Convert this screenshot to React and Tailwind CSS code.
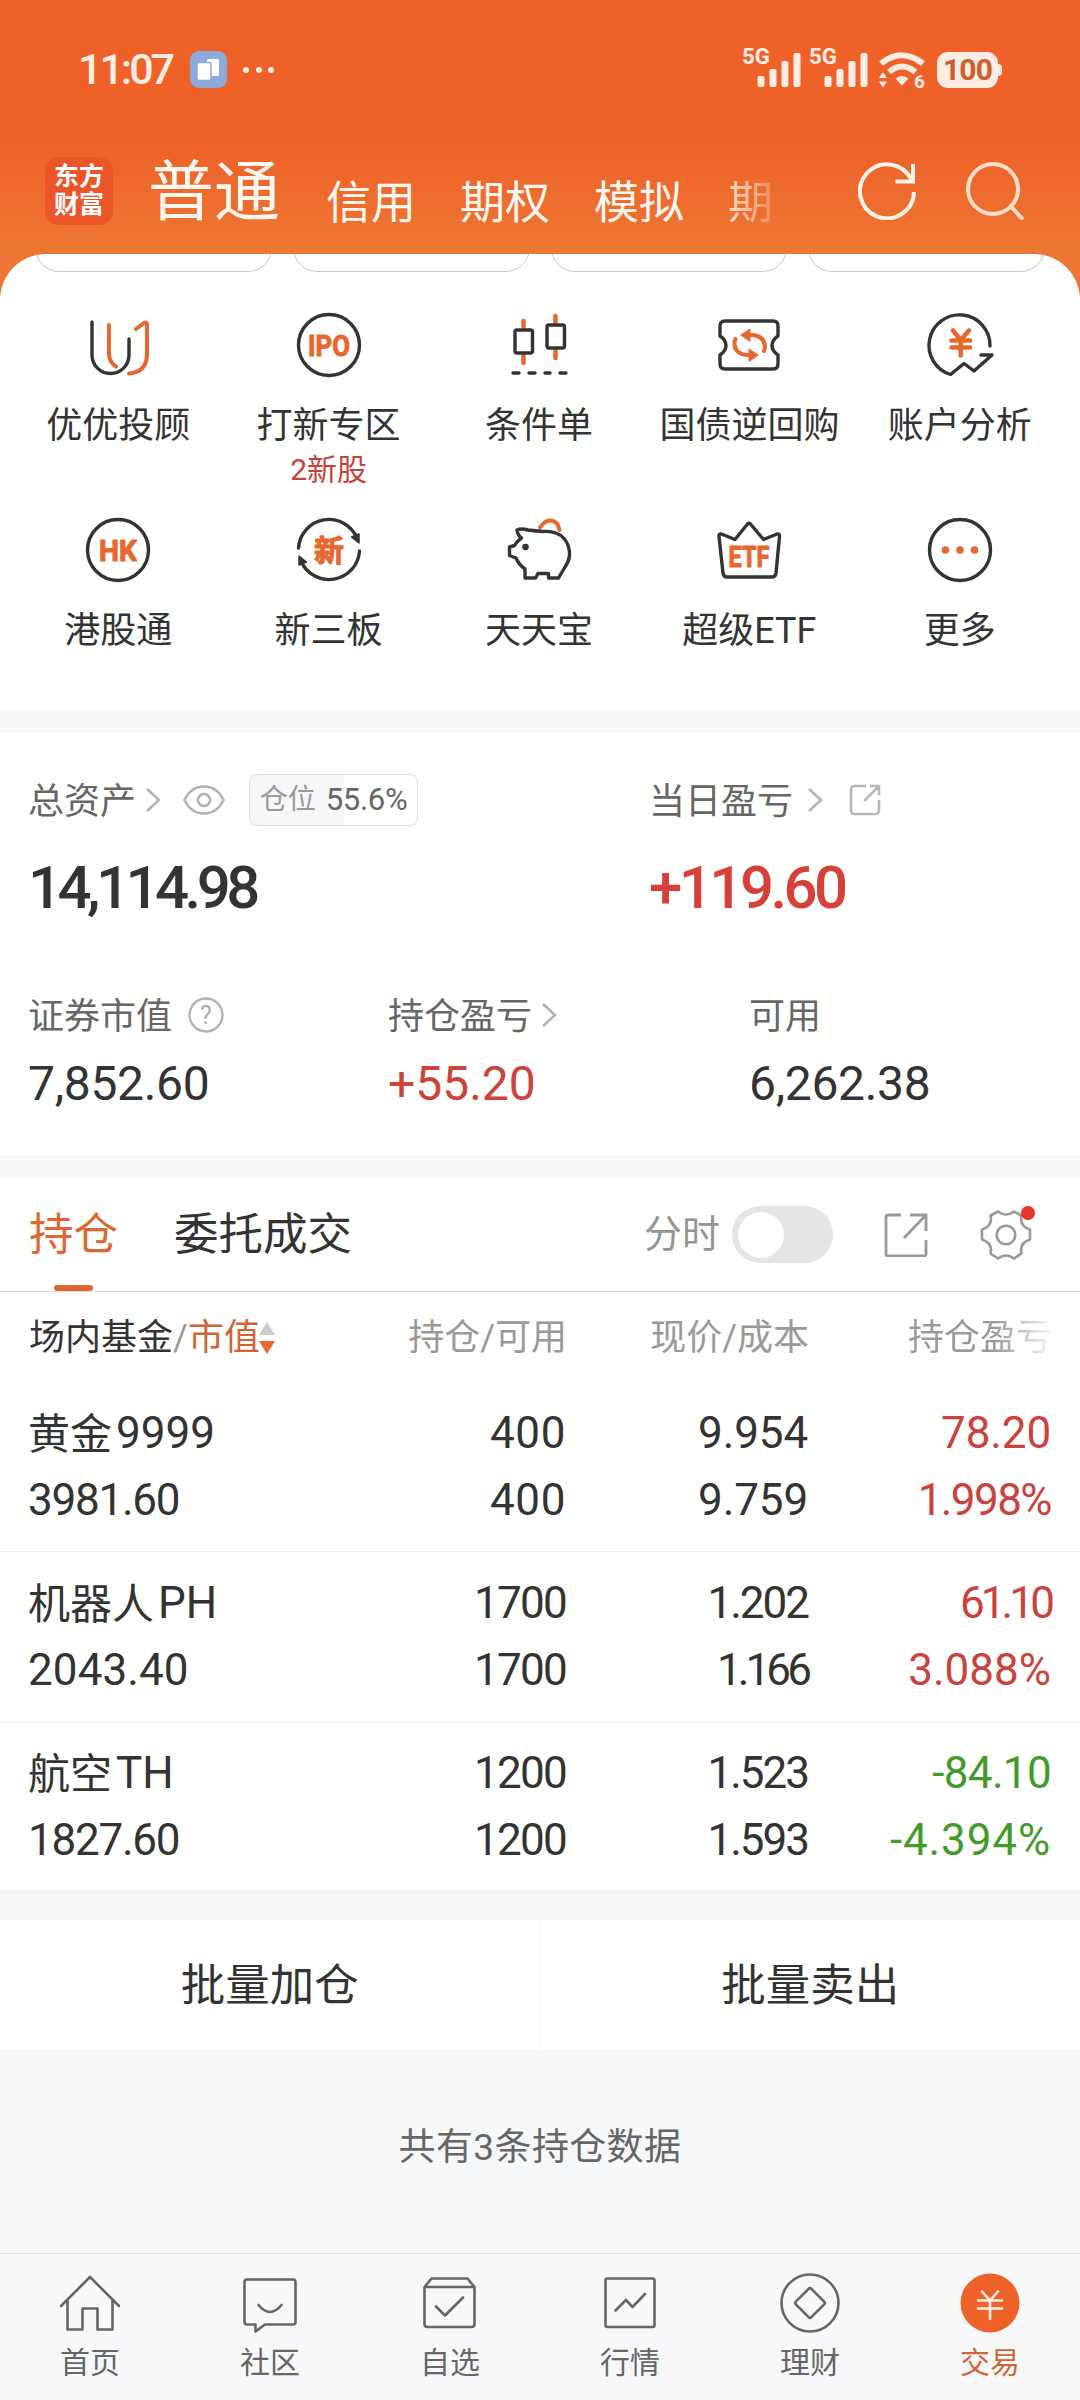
import clsx from "clsx";

const INK = "#333333";
const ORANGE = "#e8672f";

const marketTabs = ["信用", "期权", "模拟"];

const shortcuts = [
  { label: "优优投顾", icon: AdvisorIcon },
  { label: "打新专区", icon: IpoIcon, note: "2新股" },
  { label: "条件单", icon: CandleIcon },
  { label: "国债逆回购", icon: RepoIcon },
  { label: "账户分析", icon: AnalysisIcon },
  { label: "港股通", icon: HkIcon },
  { label: "新三板", icon: NeeqIcon },
  { label: "天天宝", icon: PiggyIcon },
  { label: "超级ETF", icon: EtfIcon },
  { label: "更多", icon: MoreIcon },
];

const holdings = [
  {
    name: "黄金",
    suffix: "9999",
    value: "3981.60",
    amount: "400",
    usable: "400",
    price: "9.954",
    cost: "9.759",
    profit: "78.20",
    rate: "1.998%",
    up: true,
  },
  {
    name: "机器人",
    suffix: "PH",
    value: "2043.40",
    amount: "1700",
    usable: "1700",
    price: "1.202",
    cost: "1.166",
    profit: "61.10",
    rate: "3.088%",
    up: true,
  },
  {
    name: "航空",
    suffix: "TH",
    value: "1827.60",
    amount: "1200",
    usable: "1200",
    price: "1.523",
    cost: "1.593",
    profit: "-84.10",
    rate: "-4.394%",
    up: false,
  },
];

const navItems = [
  { label: "首页", icon: HomeIcon },
  { label: "社区", icon: ChatIcon },
  { label: "自选", icon: PickIcon },
  { label: "行情", icon: QuoteIcon },
  { label: "理财", icon: WealthIcon },
  { label: "交易", icon: TradeIcon, active: true },
];

// Proportional figures: narrow characters pull the whole number tighter.
const charAdjust = { 1: -0.2, ".": -0.07, ",": -0.07, "-": 0.14 };

function Num({ children, className }) {
  const chars = [...children];
  const total = chars.reduce((sum, c) => sum + (charAdjust[c] ?? 0.014), 0);
  return (
    <span className={clsx("block", className)} style={{ letterSpacing: `${(total / chars.length).toFixed(4)}em` }}>
      {children}
    </span>
  );
}

/* ---------- shortcut icons, 64 x 64 ---------- */

function Glyph({ children }) {
  return (
    <svg
      viewBox="0 0 64 64"
      className="h-16 w-16 overflow-visible"
      fill="none"
      stroke={INK}
      strokeWidth="3.4"
      strokeLinecap="round"
      strokeLinejoin="round"
    >
      {children}
    </svg>
  );
}

function GlyphText({ children, size = 30, width, y = 43 }) {
  return (
    <text
      x="32"
      y={y}
      textAnchor="middle"
      textLength={width}
      lengthAdjust="spacingAndGlyphs"
      fontSize={size}
      fontWeight="700"
      fill={ORANGE}
      stroke={ORANGE}
      strokeWidth="1"
    >
      {children}
    </text>
  );
}

function AdvisorIcon() {
  return (
    <Glyph>
      <path d="M6 9v33a18.5 18.5 0 0 0 37 0V26" />
      <path stroke={ORANGE} strokeWidth="4" d="M23 12v29q0 8 7 12.500M50 16l8-6q3-1.500 3 2v29q0 18-18 19.500" />
    </Glyph>
  );
}

function IpoIcon() {
  return (
    <Glyph>
      <circle cx="32" cy="32" r="30.500" />
      <GlyphText width={42}>IPO</GlyphText>
    </Glyph>
  );
}

function CandleIcon() {
  return (
    <Glyph>
      <path stroke={ORANGE} strokeWidth="4.500" d="M16.500 8v6M16.500 43v7M48.500 3v6M48.500 38v7" />
      <rect x="8" y="17" width="17.500" height="23" rx="2" />
      <rect x="40" y="12" width="17.500" height="23" rx="2" />
      <path d="M6 60h6M22 60h6M38 60h5M53 60h6" />
    </Glyph>
  );
}

function RepoIcon() {
  return (
    <Glyph>
      <path d="M8 8h48q5 0 5 5v10q-6 4-6 9.500t6 9.500v9q0 5-5 5H8q-5 0-5-5v-9q6-4 6-9.500T3 23V13q0-5 5-5z" />
      <g stroke={ORANGE} strokeWidth="4">
        <path d="M31 22h4q12 1 13 11 0 3-1 5M35 42h-5q-12-1-12.500-11 0-3 1-5" />
        <path fill={ORANGE} strokeWidth="1" d="M24 22l9-6v12zM41 42l-9-6v12z" />
      </g>
    </Glyph>
  );
}

function AnalysisIcon() {
  return (
    <Glyph>
      <path d="M62 33A30.500 30.500 0 1 0 22.500 61.500L36 50.500 46 58l18-16H53" />
      <path stroke={ORANGE} strokeWidth="4.500" d="M25 17.500l7.700 9.500L41 17.500M23.500 27.500h18.500M23.500 34.500h18.500M32.700 28v14.500" />
    </Glyph>
  );
}

function HkIcon() {
  return (
    <Glyph>
      <circle cx="32" cy="32" r="30.500" />
      <GlyphText width={38}>HK</GlyphText>
    </Glyph>
  );
}

function NeeqIcon() {
  return (
    <Glyph>
      <path d="M1.500 30A30.500 30.500 0 0 1 60 20M62.500 33A30.500 30.500 0 0 1 4 43" />
      <path fill={INK} strokeWidth="1.500" d="M54.500 19l7.500-3v9zM9.500 44l-7.500 3v-9z" />
      <GlyphText size={30} width={30} y={42.5}>新</GlyphText>
    </Glyph>
  );
}

function PiggyIcon() {
  return (
    <Glyph>
      <path stroke={ORANGE} strokeWidth="4" d="M33 9.500Q38 2 44 2.500q7 1 8.500 9.500" />
      <path d="M10 12q4-2 11 0 8 1 15 1.500 14-1 21 7 6 7 5.500 17-.5 6-4.500 11.500L51.500 60H41.500v-4.500H31l-2.500 4.500H18v-9Q12 47 9 40l-6.500-2.500V29l5-1.500q2-4 7-7.500-4-3-4.500-8z" />
      <circle cx="18.500" cy="29" r="3.300" fill={INK} stroke="none" />
    </Glyph>
  );
}

function EtfIcon() {
  return (
    <Glyph>
      <path d="M4.500 16L18 21.500 30.500 6q1.500-1.500 3 0L46.500 21.500 60 16q3-.5 2.500 2.500L59 55q-.5 4-4 4H10q-3.500 0-4-4L2 18.500q-.5-3 2.500-2.500z" />
      <GlyphText size={29} width={41} y={49}>ETF</GlyphText>
    </Glyph>
  );
}

function MoreIcon() {
  return (
    <Glyph>
      <circle cx="32" cy="32" r="30.500" />
      <g fill={ORANGE} stroke="none">
        <circle cx="17.500" cy="32" r="3.800" />
        <circle cx="32" cy="32" r="3.800" />
        <circle cx="46.500" cy="32" r="3.800" />
      </g>
    </Glyph>
  );
}

/* ---------- bottom navigation icons, 60 x 60 ---------- */

function NavGlyph({ children }) {
  return (
    <svg
      viewBox="0 0 60 60"
      className="h-[60px] w-[60px]"
      fill="none"
      stroke="#666666"
      strokeWidth="2.600"
      strokeLinecap="round"
      strokeLinejoin="round"
    >
      {children}
    </svg>
  );
}

function HomeIcon() {
  return (
    <NavGlyph>
      <path d="M1 33L30 4l29 29M7.500 27v29.500h15V35.500h15v21h15V27" />
    </NavGlyph>
  );
}

function ChatIcon() {
  return (
    <NavGlyph>
      <path d="M7 6.500h46q2.500 0 2.500 2.500v40q0 2.500-2.500 2.500H25L15.500 58.500v-7H7Q4.500 51.500 4.500 49V9Q4.500 6.500 7 6.500zM18.500 32q11.500 14 23 0" />
    </NavGlyph>
  );
}

function PickIcon() {
  return (
    <NavGlyph>
      <path d="M4.500 14h50v37q0 3-3 3h-44q-3 0-3-3zl7-8.500h36l7 8.500M16 33.500l9 9L43 24.500" />
    </NavGlyph>
  );
}

function QuoteIcon() {
  return (
    <NavGlyph>
      <rect x="5.500" y="5.500" width="49" height="48.500" rx="2" />
      <path d="M15.500 37.500L26 27l6.500 7L45 21" />
    </NavGlyph>
  );
}

function WealthIcon() {
  return (
    <NavGlyph>
      <circle cx="30" cy="30" r="28.500" />
      <rect x="19" y="19" width="22" height="22" rx="2" transform="rotate(45 30 30)" />
    </NavGlyph>
  );
}

function TradeIcon() {
  return (
    <NavGlyph>
      <circle cx="30" cy="30" r="29.500" fill="#ee622a" stroke="none" />
      <path stroke="#fff0e6" d="M22 18.500l8 9 8-9M18 27.500h24M18 35.500h24M30 28v18" />
    </NavGlyph>
  );
}

/* ---------- small inline icons ---------- */

function Chevron({ className }) {
  return (
    <svg viewBox="0 0 16 26" className={clsx("h-[26px] w-4 shrink-0", className)} fill="none" stroke="#b3b3b3" strokeWidth="2.600">
      <path d="M2 2l12 11L2 24" />
    </svg>
  );
}

function EyeIcon() {
  return (
    <svg viewBox="0 0 42 30" className="ml-[22px] h-[30px] w-[42px]" fill="none" stroke="#b3b3b3" strokeWidth="2.600">
      <path d="M1.500 15Q8 1.500 21 1.500T40.500 15Q34 28.500 21 28.500T1.500 15z" />
      <circle cx="21" cy="15" r="6" />
    </svg>
  );
}

function Signal() {
  return (
    <svg viewBox="0 -8 60 48" className="h-12 w-[60px]" fill="#ffece3">
      <text x="0" y="16" fontSize="21.500" fontWeight="700" textLength="28" lengthAdjust="spacingAndGlyphs">
        5G
      </text>
      <rect x="15.500" y="28" width="7" height="11" rx="2" />
      <rect x="27.500" y="21" width="7" height="18" rx="2" />
      <rect x="39.500" y="13" width="7" height="26" rx="2" />
      <rect x="51.500" y="5" width="7" height="34" rx="2" />
    </svg>
  );
}

function Wifi() {
  return (
    <svg viewBox="0 -4 50 46" className="h-[46px] w-[50px]" fill="none" stroke="#ffece3">
      <path strokeWidth="6" d="M3 12.500Q23.500-4 45 12.500" />
      <path strokeWidth="6" d="M11 21Q24 10 37.500 21" />
      <path fill="#ffece3" stroke="none" d="M17.500 27.500q6.500-5 13 0L24 34.500zM1 27l4-6 4 6zM1 30.500h8l-4 6z" />
      <text x="36" y="36.500" fontSize="19" fontWeight="700" fill="#ffece3" stroke="none">
        6
      </text>
    </svg>
  );
}

function StatusBar() {
  return (
    <div className="flex h-[139px] items-center justify-between pl-[78px] pr-[78px] text-[#ffece3]">
      <div className="flex items-center">
        <span className="w-[97px] text-[43px] font-medium leading-none tracking-[-0.07em]">11:07</span>
        <svg viewBox="0 0 37 37" className="ml-[15px] h-[37px] w-[37px]">
          <rect width="37" height="37" rx="9" fill="#8caadc" />
          <rect x="17" y="8" width="12" height="17" rx="1.500" fill="#fff" />
          <rect x="7" y="11.500" width="14" height="18" rx="2" fill="#fff" stroke="#8caadc" strokeWidth="1.500" />
        </svg>
        <div className="ml-[16px] flex gap-[6.500px]">
          <i className="h-[6px] w-[6px] rounded-full bg-[#ffece3]" />
          <i className="h-[6px] w-[6px] rounded-full bg-[#ffece3]" />
          <i className="h-[6px] w-[6px] rounded-full bg-[#ffece3]" />
        </div>
      </div>
      <div className="flex items-center">
        <div className="flex gap-[7px] pb-3">
          <Signal />
          <Signal />
        </div>
        <div className="ml-[9px]">
          <Wifi />
        </div>
        <div className="ml-[9px] flex items-center">
          <span className="flex h-[36px] w-[61px] items-center justify-center rounded-[11px] bg-[#ffece3] text-[30px] font-bold leading-none tracking-[-0.03em] text-[#c8602f]">
            100
          </span>
          <span className="h-3 w-1 rounded-r bg-[#ffece3]" />
        </div>
      </div>
    </div>
  );
}

function Header() {
  return (
    <header className="h-[300px] bg-[linear-gradient(#ee622a_0,#ee622a_145px,#ed7734_254px)] text-[#fff8f0]">
      <StatusBar />
      <div className="flex h-[104px] items-center pl-[45px] pr-[56px]">
        <div className="grid h-[68px] w-[68px] shrink-0 grid-cols-2 place-content-center justify-items-center rounded-[14px] bg-[#ec542a] px-[9px] text-[25px] font-bold leading-[28px] text-white">
          <span>东</span>
          <span>方</span>
          <span>财</span>
          <span>富</span>
        </div>
        <h1 className="ml-[35px] pt-[4px] text-[66px] leading-none">普通</h1>
        <nav className="flex flex-1 gap-11 overflow-hidden pl-[46px] pt-[25px] text-[45px] leading-[60px]">
          {marketTabs.map((tab) => (
            <span key={tab} className="shrink-0">
              {tab}
            </span>
          ))}
          <span className="w-[46px] shrink-0 whitespace-nowrap bg-gradient-to-r from-[#ffdcc4] to-[#f08c56] bg-clip-text text-transparent">
            期
          </span>
        </nav>
        <svg viewBox="0 0 58 58" className="h-[58px] w-[58px] shrink-0" fill="none" stroke="#fff4ea" strokeWidth="4">
          <path d="M56 30A27 27 0 1 1 53.500 18M55 2v17.500H37.500" />
        </svg>
        <svg viewBox="0 0 58 58" className="ml-[50px] h-[58px] w-[58px] shrink-0" fill="none" stroke="#ffdfc9" strokeWidth="4">
          <circle cx="27" cy="27" r="25" />
          <path d="M44.500 44L57 57.500" />
        </svg>
      </div>
    </header>
  );
}

function Shortcuts() {
  return (
    <section className="-mt-[46px] h-[456px] overflow-hidden rounded-t-[46px] bg-white">
      {/* bottom edge of the account cards scrolled under the header */}
      <div className="flex h-[18px] items-end gap-[21px] px-[35px]">
        {[0, 1, 2, 3].map((i) => (
          <div key={i} className="h-[60px] flex-1 rounded-[24px] border border-[#c8c8c8]" />
        ))}
      </div>
      <div className="grid grid-cols-5 pl-[13px] pr-[15px] pt-[41px]">
        {shortcuts.map(({ label, icon: Icon, note }) => (
          <div key={label} className="flex h-[205px] flex-col items-center whitespace-nowrap text-[#333]">
            <Icon />
            <span className="mt-[27px] text-[36px] leading-[44px]">{label}</span>
            {note && <span className="mt-[6px] text-[30px] leading-[32px] text-[#c4423c]">{note}</span>}
          </div>
        ))}
      </div>
    </section>
  );
}

function Assets() {
  return (
    <section className="h-[422px] bg-white pl-[28px] text-[36px] text-[#666]">
      <div className="flex pt-[41px]">
        <div className="w-[621px]">
          <div className="flex h-[52px] items-center">
            <span className="pt-[3px]">总资产</span>
            <Chevron className="ml-[9px]" />
            <EyeIcon />
            <div className="ml-[24px] flex h-[52px] w-[169px] items-center justify-center gap-[10px] rounded-lg border border-[#dfdfe2] bg-[linear-gradient(90deg,#f7f7fa_56%,#fff_56%)] text-[28px] text-[#999]">
              仓位
              <span className="text-[31px] tracking-[-0.01em] text-[#666]">55.6%</span>
            </div>
          </div>
          <Num className="mt-[32px] text-[60px] font-medium leading-[60px] text-[#333]">14,114.98</Num>
        </div>
        <div>
          <div className="flex h-[52px] items-center">
            <span className="pt-[3px]">当日盈亏</span>
            <Chevron className="ml-[14px]" />
            <svg viewBox="0 0 32 32" className="ml-[26px] h-8 w-8" fill="none" stroke="#b8b8b8" strokeWidth="2.600">
              <path d="M17 2H6Q2 2 2 6v20q0 4 4 4h20q4 0 4-4V16M21 2h9v9M30 2L15 17" />
            </svg>
          </div>
          <Num className="mt-[32px] text-[60px] font-medium leading-[60px] text-[#d64038]">+119.60</Num>
        </div>
      </div>

      <div className="flex pt-[75px]">
        <div className="w-[360px]">
          <div className="flex h-[44px] items-center">
            <span className="pt-[3px]">证券市值</span>
            <svg viewBox="0 0 36 36" className="ml-[16px] h-9 w-9">
              <circle cx="18" cy="18" r="16.500" fill="none" stroke="#b3b3b3" strokeWidth="2.400" />
              <text x="18" y="27" textAnchor="middle" fontSize="25" fill="#aaaaaa">
                ?
              </text>
            </svg>
          </div>
          <Num className="mt-[22px] text-[48px] leading-[50px] text-[#333]">7,852.60</Num>
        </div>
        <div className="w-[361px]">
          <div className="flex h-[44px] items-center">
            <span className="pt-[3px]">持仓盈亏</span>
            <Chevron className="ml-[9px]" />
          </div>
          <Num className="mt-[22px] text-[48px] leading-[50px] text-[#cc433c]">+55.20</Num>
        </div>
        <div>
          <div className="flex h-[44px] items-center">
            <span className="pt-[3px]">可用</span>
          </div>
          <Num className="mt-[22px] text-[48px] leading-[50px] text-[#333]">6,262.38</Num>
        </div>
      </div>
    </section>
  );
}

function HoldingTabs() {
  return (
    <div className="flex h-[114px] items-center border-b border-[#dcdcdc] pl-[29px] pr-[48px] text-[44.500px]">
      <div className="relative flex h-[113px] items-center pt-[2px] text-[#dd6733]">
        持仓
        <span className="absolute bottom-0 left-[25px] h-[6px] w-[39px] rounded-full bg-[#e06632]" />
      </div>
      <div className="ml-[56px] pt-[2px] text-[#333]">委托成交</div>
      <div className="ml-auto flex items-center text-[38px] text-[#949494]">
        分时
        <span className="ml-[12px] flex h-[57px] w-[101px] items-center rounded-full bg-[#e5e5e7] pl-[6px]">
          <span className="h-[46px] w-[46px] rounded-full bg-white" />
        </span>
        <svg viewBox="0 0 44 44" className="ml-[51px] h-11 w-11" fill="none" stroke="#999999" strokeWidth="2.800">
          <path d="M17 2H4Q2 2 2 4v37q0 2 2 2h36q2 0 2-2V27M26 2h16v16M41 3L20 25" />
        </svg>
        <span className="relative ml-[52px]">
          <svg viewBox="0 0 52 50" className="h-[50px] w-[52px]" fill="none" stroke="#999999" strokeWidth="2.600" strokeLinejoin="round">
            <path d="M18 1.500q8 6 16 0l7.500 4Q39 16 50 19.500v10Q39 33 41.500 43.500L34 48.500q-8-6-16 0l-7.500-5Q13 33 2 29.500v-10Q13 16 10.500 5.500z" />
            <circle cx="26" cy="25" r="9.300" />
          </svg>
          <i className="absolute -right-[3px] -top-[4px] h-[14px] w-[14px] rounded-full bg-[#e93427]" />
        </span>
      </div>
    </div>
  );
}

function Cell({ top, bottom, className }) {
  return (
    <div className={clsx("text-right text-[44px] leading-[67px]", className)}>
      <Num>{top}</Num>
      <Num>{bottom}</Num>
    </div>
  );
}

function Holdings() {
  return (
    <section className="bg-white">
      <HoldingTabs />
      <div className="grid h-[90px] grid-cols-[284px_254px_242px_243px] items-center pl-[29px] pt-[2px] text-[36px] text-[#999]">
        <div className="flex items-center whitespace-nowrap text-[#333]">
          场内基金<span className="text-[#999]">/</span>
          <span className="text-[#cf6534]">市值</span>
          <svg viewBox="0 0 16 34" className="-ml-px h-[34px] w-4 shrink-0">
            <path d="M8 1l8 13H0z" fill="#cccccc" />
            <path d="M8 33l8-13H0z" fill="#e8672f" />
          </svg>
        </div>
        <div className="text-right">持仓/可用</div>
        <div className="text-right">现价/成本</div>
        <div className="flex justify-end">
          <span className="bg-[linear-gradient(90deg,#999_60%,#eee_96%)] bg-clip-text text-transparent">持仓盈亏</span>
        </div>
      </div>
      {holdings.map((h) => (
        <div
          key={h.value}
          className="grid h-[170px] grid-cols-[284px_254px_242px_243px] border-b border-[#ececec] pl-[28px] pt-[18px] text-[#333]"
        >
          <div className="text-[44px] leading-[67px]">
            <div className="flex h-[67px]">
              <span className="pt-px text-[42px]">{h.name}</span>
              <span className="ml-[4px]">{h.suffix}</span>
            </div>
            <Num>{h.value}</Num>
          </div>
          <Cell top={h.amount} bottom={h.usable} />
          <Cell top={h.price} bottom={h.cost} />
          <Cell top={h.profit} bottom={h.rate} className={h.up ? "text-[#c9433c]" : "text-[#429a2c]"} />
        </div>
      ))}
    </section>
  );
}

function BatchActions() {
  return (
    <div className="mt-[28px] flex h-[129px] items-center bg-white text-[44.500px] text-[#333]">
      <button className="h-full flex-1 pt-[3px]">批量加仓</button>
      <span className="h-full w-px bg-[#f5f5f6]" />
      <button className="h-full flex-1 pt-[3px]">批量卖出</button>
    </div>
  );
}

function BottomNav() {
  return (
    <nav className="grid h-[147px] grid-cols-6 border-t border-[#e0e0e2] bg-[#f8f8fb]">
      {navItems.map(({ label, icon: Icon, active }) => (
        <div
          key={label}
          className={clsx("flex flex-col items-center pt-[19px] text-[30px] leading-[40px]", active ? "text-[#cf6534]" : "text-[#666]")}
        >
          <Icon />
          <span className="mt-[10px]">{label}</span>
        </div>
      ))}
    </nav>
  );
}

export default function App() {
  return (
    <div className="flex h-[2400px] w-[1080px] flex-col overflow-hidden bg-[#f7f8fa] font-['Roboto','Noto_Sans_CJK_SC',sans-serif]">
      <Header />
      <Shortcuts />
      <div className="mt-[23px]">
        <Assets />
      </div>
      <div className="mt-[23px]">
        <Holdings />
      </div>
      <BatchActions />
      <div className="flex flex-1 items-center justify-center text-[37px] tracking-[0.01em] text-[#666]">
        <span className="pb-[6px]">共有3条持仓数据</span>
      </div>
      <BottomNav />
    </div>
  );
}
